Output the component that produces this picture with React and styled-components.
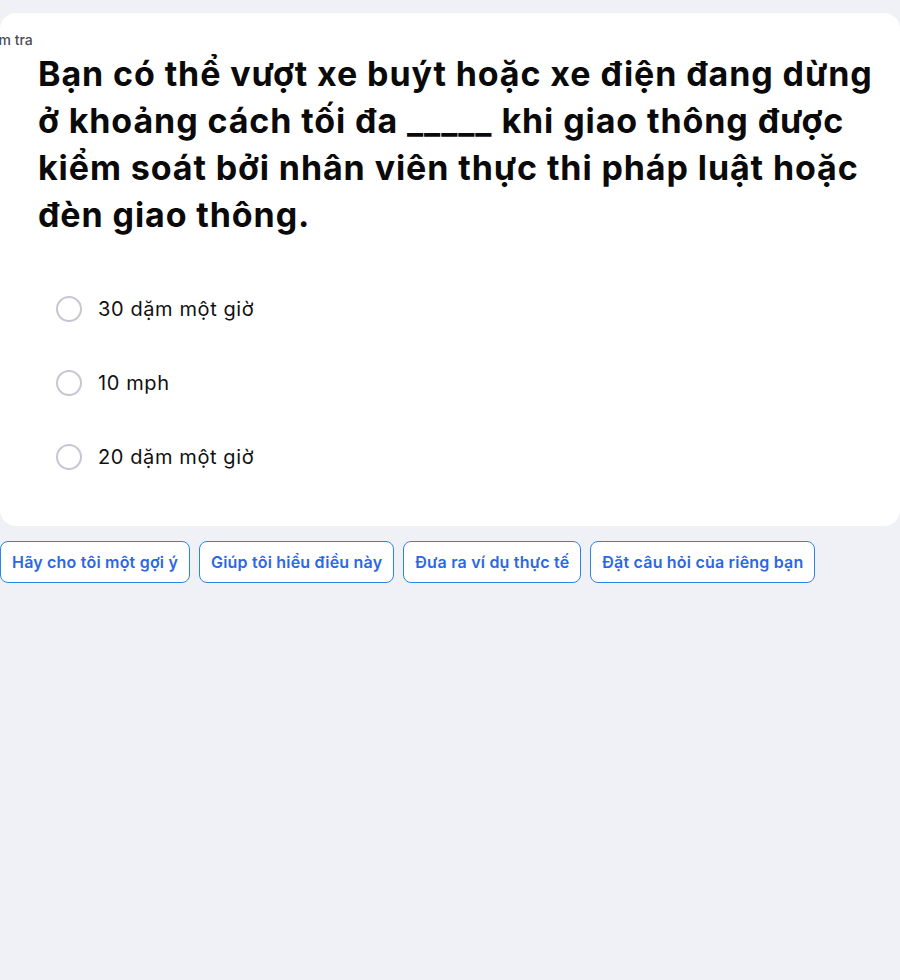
import React from "react";
import styled, { createGlobalStyle } from "styled-components";

const Global = createGlobalStyle`
  html, body { margin: 0; padding: 0; background: #f0f1f6; }
  body { font-family: "Inter", "Liberation Sans", sans-serif; overflow: hidden; }
  * { box-sizing: border-box; }
`;

const Page = styled.div`
  width: 900px;
  min-height: 980px;
  padding-top: 13px;
  background: #f0f1f6;
`;

const Card = styled.section`
  background: #ffffff;
  border-radius: 16px;
  width: 900px;
  padding: 17px 20px 32px 38px;
`;

const Label = styled.div`
  margin-left: -61px;
  font-size: 14px;
  line-height: 20px;
  font-weight: 500;
  color: #4c4c57;
`;

const Question = styled.h1`
  margin: 0;
  font-size: 34px;
  line-height: 47px;
  font-weight: 700;
  color: #0a0a0a;
  letter-spacing: 0.9px;
  max-width: 842px;
`;

const Options = styled.div`
  margin-top: 34px;
  margin-left: 18px;
  display: flex;
  flex-direction: column;
`;

const Option = styled.label`
  height: 74px;
  display: flex;
  align-items: center;
  gap: 16px;
  cursor: pointer;
  font-size: 20px;
  letter-spacing: 0.6px;
  color: #111;
`;

const Radio = styled.span`
  width: 26px;
  height: 26px;
  border-radius: 50%;
  border: 2px solid #c6c6d4;
  background: #fff;
  flex: none;
`;

const Actions = styled.div`
  display: flex;
  gap: 9px;
  margin-top: 15px;
`;

const Chip = styled.button`
  height: 42px;
  padding: 0 11px;
  border: 1.5px solid #2a86e6;
  border-radius: 8px;
  background: #fff;
  color: #2c68e2;
  font-family: "Inter", "Liberation Sans", sans-serif;
  font-size: 16px;
  letter-spacing: 0.2px;
  font-weight: 600;
  cursor: pointer;
`;

const options = ["30 dặm một giờ", "10 mph", "20 dặm một giờ"];
const chips = [
  "Hãy cho tôi một gợi ý",
  "Giúp tôi hiểu điều này",
  "Đưa ra ví dụ thực tế",
  "Đặt câu hỏi của riêng bạn",
];

export default function App() {
  return (
    <>
      <Global />
      <Page>
        <Card>
          <Label>Kiểm tra</Label>
          <Question>
            Bạn có thể vượt xe buýt hoặc xe điện đang dừng ở khoảng cách tối đa _____ khi giao thông được kiểm soát bởi nhân viên thực thi pháp luật hoặc đèn giao thông.
          </Question>
          <Options>
            {options.map((o) => (
              <Option key={o}>
                <Radio />
                {o}
              </Option>
            ))}
          </Options>
        </Card>
        <Actions>
          {chips.map((c) => (
            <Chip key={c}>{c}</Chip>
          ))}
        </Actions>
      </Page>
    </>
  );
}
